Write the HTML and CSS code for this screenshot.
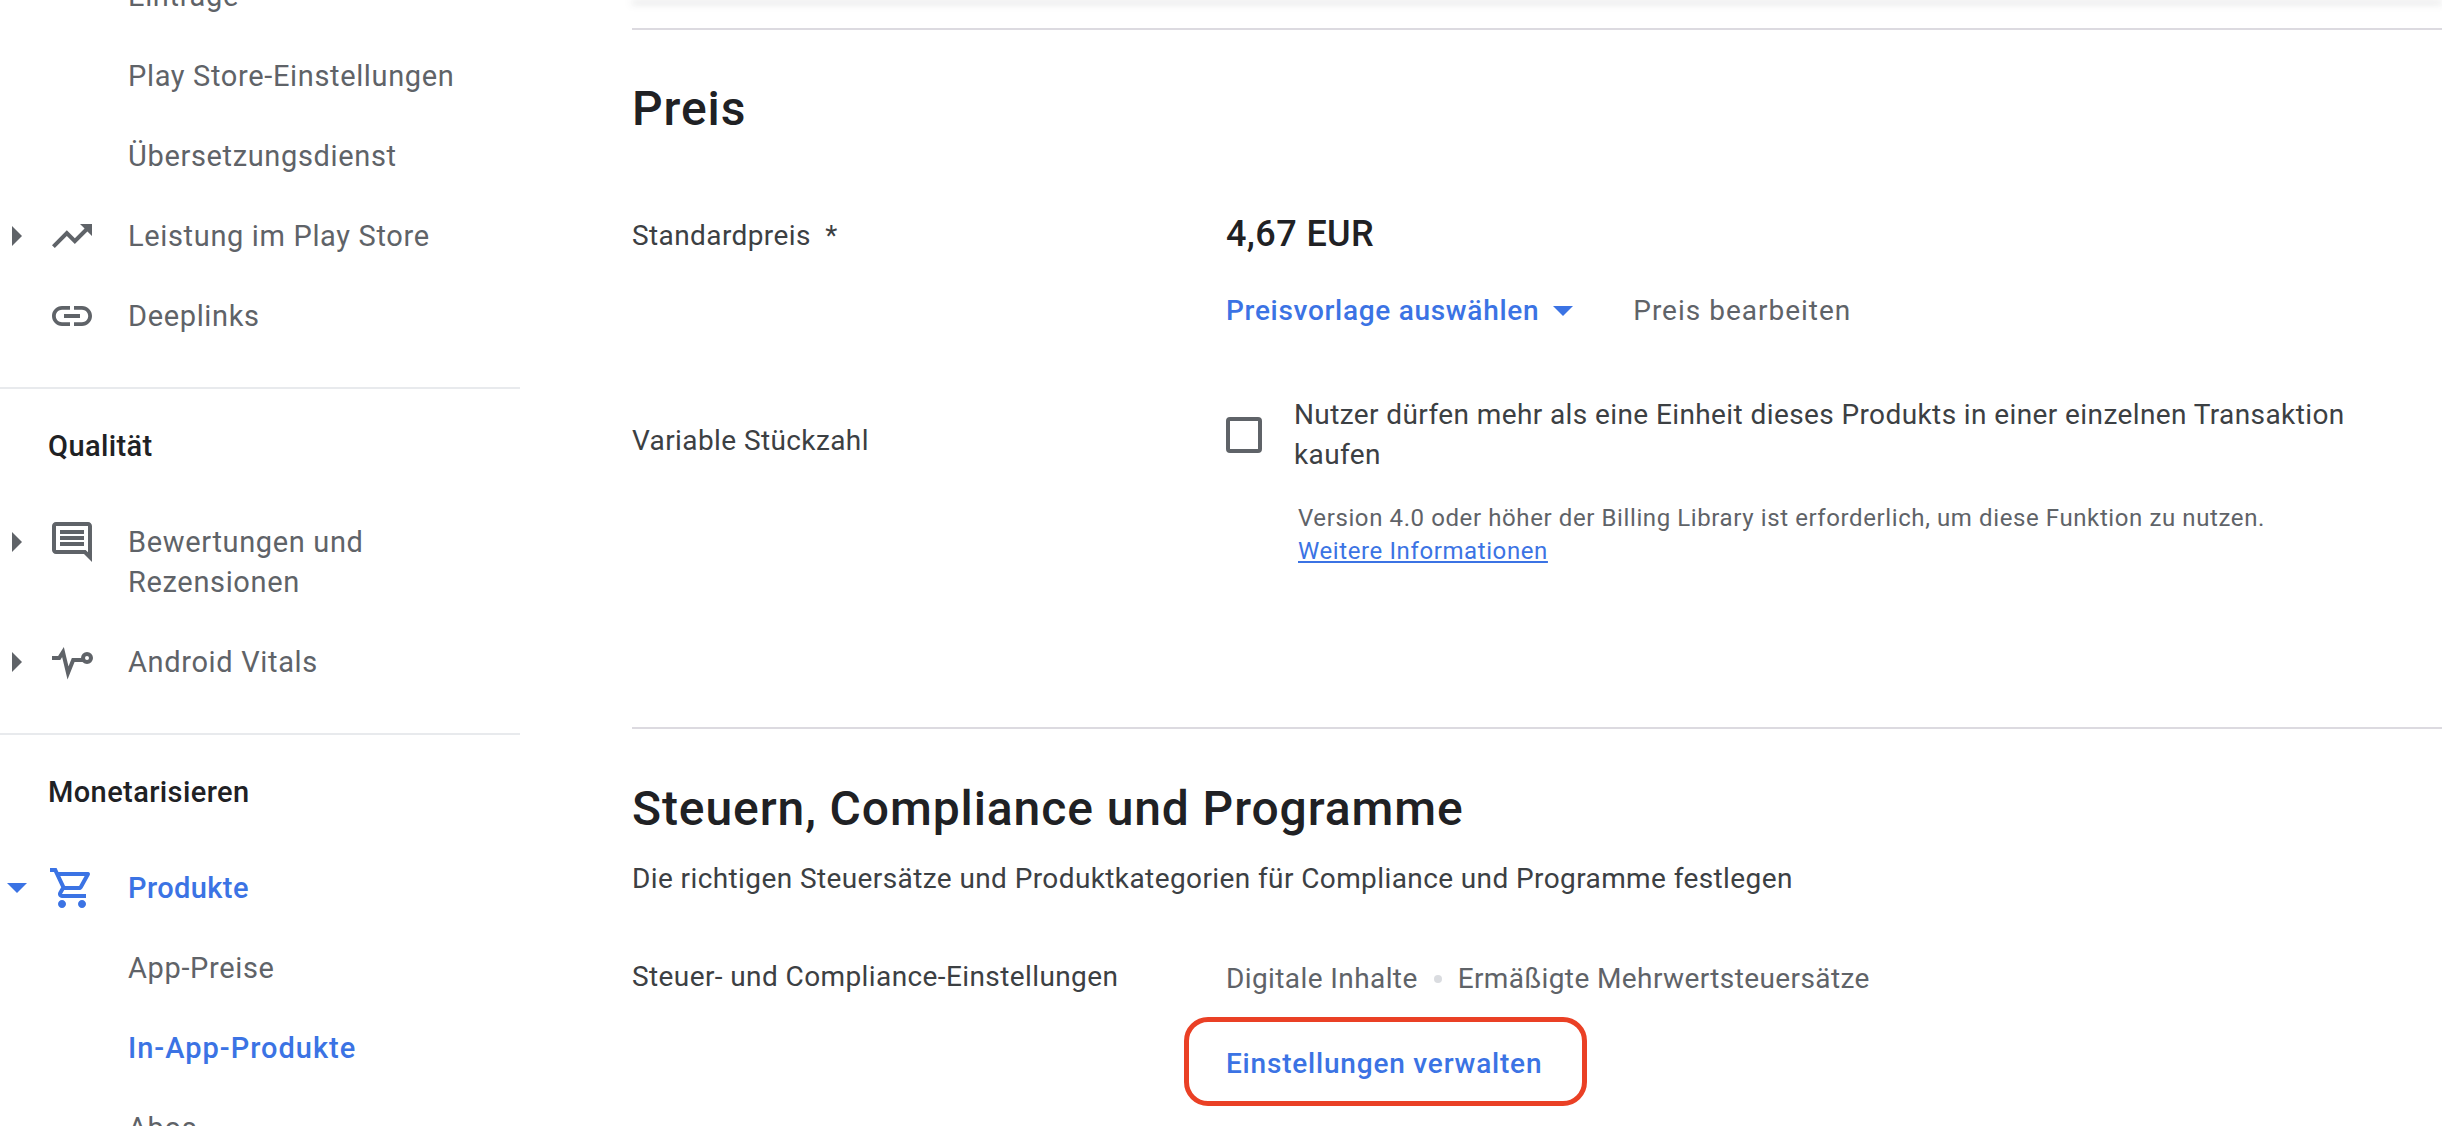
FILE: index.html
```html
<!DOCTYPE html>
<html lang="de">
<head>
  <meta charset="UTF-8">
  <title>Produkt bearbeiten</title>
  <link rel="stylesheet" href="styles.css">
</head>
<body>

<div class="page">
  <nav class="sidebar">
    <div class="nav-row"><span class="nav-label">Einträge</span></div>
    <div class="nav-row"><span class="nav-label">Play Store-Einstellungen</span></div>
    <div class="nav-row"><span class="nav-label">Übersetzungsdienst</span></div>
    <div class="nav-row">
      <span class="caret"><svg width="10" height="20" viewBox="0 0 10 20"><path d="M0 0l10 10L0 20z"/></svg></span>
      <svg class="nav-icon" viewBox="0 0 24 24"><path d="M16 6l2.29 2.29-4.88 4.88-4-4L2 16.59 3.41 18l6-6 4 4 6.3-6.29L22 12V6z"/></svg>
      <span class="nav-label">Leistung im Play Store</span>
    </div>
    <div class="nav-row">
      <span class="caret"></span>
      <svg class="nav-icon" viewBox="0 0 24 24"><path d="M3.9 12c0-1.71 1.39-3.1 3.1-3.1h4V7H7c-2.76 0-5 2.24-5 5s2.24 5 5 5h4v-1.9H7c-1.71 0-3.1-1.39-3.1-3.1zM8 13h8v-2H8v2zm9-6h-4v1.9h4c1.71 0 3.1 1.39 3.1 3.1s-1.39 3.1-3.1 3.1h-4V17h4c2.76 0 5-2.24 5-5s-2.24-5-5-5z"/></svg>
      <span class="nav-label">Deeplinks</span>
    </div>

    <div class="nav-divider"></div>
    <div class="nav-heading">Qualität</div>
    <div class="nav-row">
      <span class="caret"><svg width="10" height="20" viewBox="0 0 10 20"><path d="M0 0l10 10L0 20z"/></svg></span>
      <svg class="nav-icon" viewBox="0 0 24 24"><path d="M21.99 4c0-1.1-.89-2-1.99-2H4c-1.1 0-2 .9-2 2v12c0 1.1.9 2 2 2h14l4 4-.01-18zM20 4v13.17L18.83 16H4V4h16zM6 12h12v2H6zm0-3h12v2H6zm0-3h12v2H6z"/></svg>
      <span class="nav-label">Bewertungen und Rezensionen</span>
    </div>
    <div class="nav-row">
      <span class="caret"><svg width="10" height="20" viewBox="0 0 10 20"><path d="M0 0l10 10L0 20z"/></svg></span>
      <svg class="nav-icon" viewBox="0 0 24 24"><path class="vitals-line" d="M2 10h3.6L7.5 7l2.5 10.5L12.6 11h4.9"/><circle class="vitals-line" cx="19.5" cy="10" r="2"/></svg>
      <span class="nav-label">Android Vitals</span>
    </div>

    <div class="nav-divider"></div>
    <div class="nav-heading">Monetarisieren</div>
    <div class="nav-row active">
      <span class="caret"><svg width="20" height="10" viewBox="0 0 20 10"><path d="M0 0h20L10 10z"/></svg></span>
      <svg class="nav-icon" viewBox="0 0 24 24"><path d="M15.55 13c.75 0 1.41-.41 1.75-1.03l3.58-6.47c.37-.66-.11-1.48-.87-1.48H5.21l-.94-2H1v2h2l3.6 7.59-1.35 2.44C4.52 15.37 5.48 17 7 17h12v-2H7l1.1-2h7.45zM6.16 6h12.15l-2.76 5H8.53L6.16 6zM7 18c-1.1 0-1.99.9-1.99 2S5.9 22 7 22s2-.9 2-2-.9-2-2-2zm10 0c-1.1 0-1.99.9-1.99 2s.89 2 1.99 2 2-.9 2-2-.9-2-2-2z"/></svg>
      <span class="nav-label">Produkte</span>
    </div>
    <div class="nav-row"><span class="nav-label">App-Preise</span></div>
    <div class="nav-row active nav-wide"><span class="nav-label">In-App-Produkte</span></div>
    <div class="nav-row"><span class="nav-label">Abos</span></div>
  </nav>

  <main class="content">
    <div class="card-edge"></div>
    <div class="divider"></div>

    <h2 class="section-title title-price">Preis</h2>
    <div class="field field-price">
      <div class="field-label label-price">Standardpreis <span class="required">*</span></div>
      <div>
        <div class="price">4,67 EUR</div>
        <div class="price-actions">
          <span class="link">Preisvorlage auswählen</span>
          <svg class="link-caret" width="20" height="10" viewBox="0 0 20 10"><path d="M0 0h20L10 10z"/></svg>
          <span class="edit-price">Preis bearbeiten</span>
        </div>
      </div>
    </div>

    <div class="field field-quantity">
      <div class="field-label label-quantity">Variable Stückzahl</div>
      <div>
        <div class="check-row">
          <span class="checkbox"></span>
          <span class="check-text">Nutzer dürfen mehr als eine Einheit dieses Produkts in einer einzelnen Transaktion kaufen</span>
        </div>
        <p class="hint">Version 4.0 oder höher der Billing Library ist erforderlich, um diese Funktion zu nutzen.<br><span class="link-underline">Weitere Informationen</span></p>
      </div>
    </div>

    <div class="divider divider-tax"></div>

    <h2 class="section-title title-tax">Steuern, Compliance und Programme</h2>
    <p class="section-sub">Die richtigen Steuersätze und Produktkategorien für Compliance und Programme festlegen</p>
    <div class="field field-tax">
      <div class="field-label">Steuer- und Compliance-Einstellungen</div>
      <div>
        <div class="tax-values">Digitale Inhalte<span class="dot"></span>Ermäßigte Mehrwertsteuersätze</div>
        <div class="manage">
          <span class="link link-manage">Einstellungen verwalten</span>
          <span class="highlight"></span>
        </div>
      </div>
    </div>
  </main>
</div>

</body>
</html>
```

FILE: styles.css
```css
html, body {
  margin: 0;
  height: 1126px;
  overflow: hidden;
  background-color: #fff;
}

body {
  font-family: Roboto, "Liberation Sans", sans-serif;
  font-size: 28px;
  line-height: 40px;
  letter-spacing: 0.4px;
  color: #3c4043;
}

.page {
  display: flex;
}

/* sidebar */
.sidebar {
  flex: 0 0 520px;
  margin-top: -44px;
  color: #5f6368;
  fill: #5f6368;
  font-size: 29px;
}

.nav-row {
  display: flex;
  align-items: flex-start;
  padding: 20px 0;
  padding-left: 128px;
}

.nav-row:has(.caret) {
  padding-left: 0;
}

.caret {
  flex: 0 0 34px;
  height: 40px;
  display: flex;
  align-items: center;
  justify-content: center;
}

.nav-icon {
  flex: 0 0 48px;
  width: 48px;
  height: 48px;
  margin: -4px 32px -4px 14px;
}

.nav-label {
  flex: 1;
  padding-right: 40px;
  letter-spacing: 0.65px;
}

.vitals-line {
  fill: none;
  stroke: #5f6368;
  stroke-width: 2;
}

.active {
  color: #3b73e4;
  fill: #3b73e4;
}

.active .nav-label {
  font-weight: 500;
  letter-spacing: 0.4px;
}

.nav-wide .nav-label {
  letter-spacing: 1px;
}

.nav-divider {
  height: 2px;
  margin-top: 31px;
  background-color: #e8eaed;
}

.nav-heading {
  margin: 37px 0 36px 48px;
  color: #202124;
  font-weight: 500;
}

/* main content */
.content {
  flex: 1;
  padding-left: 112px;
  min-width: 0;
}

.card-edge {
  height: 1px;
  margin-top: -1px;
  box-shadow: 0 3px 7px rgba(60, 64, 67, 0.55);
}

.divider {
  height: 2px;
  margin-top: 28px;
  background-color: #dcdae0;
}

.section-title {
  margin: 0;
  font-size: 48px;
  line-height: 56px;
  font-weight: 500;
  letter-spacing: 0.9px;
  color: #202124;
}

.title-price {
  margin-top: 51px;
}

.field {
  display: grid;
  grid-template-columns: 594px 1fr;
}

.field-price {
  margin-top: 78px;
}

.field-label {
  color: #3c4043;
}

.label-price {
  padding-top: 1px;
}

.required {
  margin-left: 7px;
}

.price {
  margin-top: -1px;
  font-size: 36px;
  font-weight: 500;
  color: #202124;
}

.price-actions {
  display: flex;
  align-items: center;
  margin-top: 37px;
}

.link {
  color: #3b73e4;
  font-weight: 500;
  letter-spacing: 0.7px;
}

.link-manage {
  letter-spacing: 0.8px;
}

.link-caret {
  margin-left: 14px;
  fill: #3b73e4;
}

.edit-price {
  margin-left: 60px;
  color: #5f6368;
  letter-spacing: 1px;
}

.field-quantity {
  margin-top: 64px;
}

.label-quantity {
  padding-top: 26px;
}

.check-row {
  display: flex;
  align-items: center;
  gap: 32px;
}

.check-text {
  max-width: 1100px;
}

.checkbox {
  flex: 0 0 36px;
  height: 36px;
  box-sizing: border-box;
  border: 4px solid #5f6368;
  border-radius: 4px;
}

.hint {
  margin: 27px 0 0 72px;
  font-size: 24px;
  line-height: 33px;
  letter-spacing: 0.6px;
  color: #5f6368;
}

.link-underline {
  color: #3b73e4;
  text-decoration: underline;
}

.divider-tax {
  margin-top: 159px;
}

.title-tax {
  margin-top: 52px;
}

.section-sub {
  margin: 22px 0 0;
}

.field-tax {
  margin-top: 58px;
}

.tax-values {
  display: flex;
  align-items: center;
  padding-top: 2px;
  color: #5f6368;
}

.dot {
  width: 8px;
  height: 8px;
  margin: 0 16px;
  border-radius: 50%;
  background-color: #dadce0;
}

.manage {
  position: relative;
  margin-top: 45px;
  width: max-content;
}

.highlight {
  position: absolute;
  left: -42px;
  right: -45px;
  top: -27px;
  bottom: -22px;
  border: 5px solid #ea4025;
  border-radius: 24px;
}
```
